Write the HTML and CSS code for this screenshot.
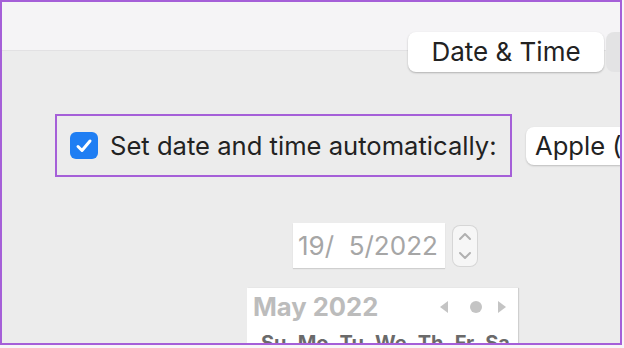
FILE: index.html
```html
<!DOCTYPE html>
<html lang="en">
<head>
  <meta charset="UTF-8" />
  <title>Date &amp; Time</title>
  <link rel="stylesheet" href="styles.css">
</head>
<body>

  <div class="frame">
    <!-- Toolbar with tabs -->
    <div class="toolbar">
      <div class="tabs">
        <div class="tab active">Date &amp; Time</div>
        <div class="tab"></div>
      </div>
    </div>

    <div class="content">
      <!-- Auto row -->
      <div class="auto-row">
        <label class="auto-box">
          <span class="checkbox">
            <svg width="18" height="16" viewBox="0 0 18 16">
              <path d="M3 8.5 L7 12.5 L15 3" fill="none" stroke="#fff" stroke-width="3" stroke-linecap="round" stroke-linejoin="round"/>
            </svg>
          </span>
          Set date and time automatically:
        </label>
        <div class="popup">Apple (time.apple.com)</div>
      </div>

      <!-- Date field -->
      <div class="date-row">
        <div class="date-field">19/&nbsp;&nbsp;5/2022</div>
        <div class="stepper">
          <svg width="24" height="40" viewBox="0 0 24 40">
            <path d="M7 13 L12 8 L17 13" fill="none" stroke="#b0b0b0" stroke-width="2" stroke-linecap="round" stroke-linejoin="round"/>
            <path d="M7 27 L12 32 L17 27" fill="none" stroke="#b0b0b0" stroke-width="2" stroke-linecap="round" stroke-linejoin="round"/>
          </svg>
        </div>
      </div>

      <!-- Calendar -->
      <div class="calendar">
        <div class="cal-head">
          <span class="month">May 2022</span>
          <span class="cal-nav">
            <svg width="66" height="16" viewBox="0 0 66 16">
              <path d="M8 2 L0 8 L8 14 Z" fill="#c4c4c4"/>
              <circle cx="36" cy="8" r="6" fill="#c4c4c4"/>
              <path d="M58 2 L66 8 L58 14 Z" fill="#c4c4c4"/>
            </svg>
          </span>
        </div>
        <div class="weekdays">
          <span>Su</span><span>Mo</span><span>Tu</span><span>We</span><span>Th</span><span>Fr</span><span>Sa</span>
        </div>
      </div>
    </div>
  </div>

</body>
</html>
```

FILE: styles.css
```css
body, html {
  margin: 0;
  padding: 0;
  background: #f7f6f8;
  font-family: Inter, "Noto Sans", sans-serif;
}

.frame {
  width: 618px;
  height: 341px;
  border: 2px solid #a55fd8;
  background: #ececec;
  overflow: hidden;
}

.toolbar {
  height: 48px;
  background: #f5f4f6;
  border-bottom: 1px solid #e2e1e3;
}

.tabs {
  display: flex;
  gap: 2px;
  padding: 30px 0 0 406px;
}

.tab {
  position: relative;
  z-index: 1;
  flex: none;
  width: 60px;
  height: 40px;
  line-height: 40px;
  font-size: 26px;
  color: #222;
  background: #e3e3e4;
  border-radius: 8px;
}

.tab.active {
  width: 196px;
  text-align: center;
  background: #fff;
  box-shadow: 0 1px 2px rgba(0, 0, 0, 0.25);
}

.content {
  padding-left: 53px;
}

.auto-row {
  display: flex;
  align-items: center;
  margin-top: 63px;
}

.auto-box {
  flex: none;
  display: flex;
  align-items: center;
  gap: 12px;
  width: 457px;
  height: 63px;
  padding-left: 13px;
  border: 2px solid #a55fd8;
  box-sizing: border-box;
  font-size: 25.6px;
  color: #222;
  white-space: nowrap;
}

.checkbox {
  display: flex;
  align-items: center;
  justify-content: center;
  width: 28px;
  height: 27px;
  border-radius: 6px;
  background: #1f7ef3;
}

.popup {
  flex: none;
  margin-left: 14px;
  height: 38px;
  line-height: 38px;
  padding: 0 9px;
  font-size: 25.6px;
  color: #222;
  background: #fff;
  border-radius: 8px;
  box-shadow: 0 1px 2px rgba(0, 0, 0, 0.2);
  white-space: nowrap;
}

.date-row {
  display: flex;
  align-items: center;
  gap: 8px;
  margin: 46px 0 0 238px;
}

.date-field {
  width: 152px;
  height: 45px;
  line-height: 45px;
  padding-left: 5px;
  box-sizing: border-box;
  font-size: 26px;
  color: #a6a6a6;
  background: #fff;
  box-shadow: 0 1px 1px rgba(0, 0, 0, 0.12);
  white-space: nowrap;
}

.stepper {
  width: 24px;
  height: 40px;
  border-radius: 7px;
  background: #f6f6f6;
  box-shadow: 0 0 0 1px #d6d6d6;
}

.stepper svg {
  display: block;
}

.calendar {
  width: 271px;
  height: 80px;
  margin: 20px 0 0 192px;
  background: #fff;
  box-shadow: 1px 0 1px rgba(0, 0, 0, 0.12);
}

.cal-head {
  display: flex;
  align-items: center;
  justify-content: space-between;
  padding: 3px 12px 0 6px;
}

.month {
  font-size: 25.6px;
  font-weight: bold;
  color: #bcbcbc;
}

.cal-nav svg {
  display: block;
}

.weekdays {
  display: flex;
  justify-content: space-between;
  padding: 9px 8px 0 14px;
  font-size: 20px;
  font-weight: bold;
  color: #6a6a6a;
}
```
